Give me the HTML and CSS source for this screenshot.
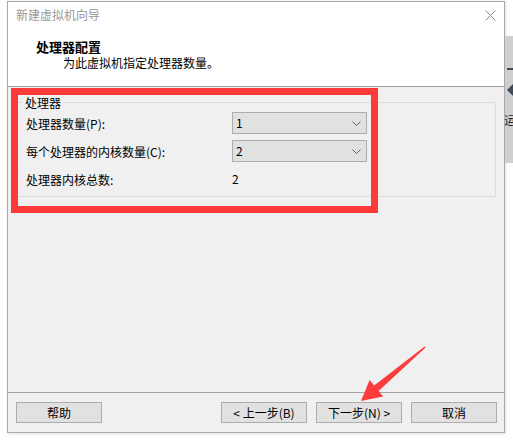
FILE: index.html
```html
<!DOCTYPE html>
<html lang="zh-CN">
<head>
<meta charset="utf-8">
<title>新建虚拟机向导</title>
<link rel="stylesheet" href="styles.css">
</head>
<body>
<div class="page">
  <div class="window">
    <div class="titlebar">
      <span class="title">新建虚拟机向导</span>
      <svg class="close" width="11" height="11" viewBox="0 0 11 11"><path d="M0.5 0.5 L10.5 10.5 M10.5 0.5 L0.5 10.5" stroke="#8a8a8a" stroke-width="1" fill="none"/></svg>
    </div>
    <div class="header">
      <div class="h-title">处理器配置</div>
      <div class="h-sub">为此虚拟机指定处理器数量。</div>
    </div>
    <div class="content">
      <div class="group">
        <div class="legend">处理器</div>
        <div class="rows">
          <div class="label">处理器数量(P):</div>
          <div class="select"><span>1</span><svg width="9" height="5" viewBox="0 0 9 5"><path d="M0.5 0.5 L4.5 4.5 L8.5 0.5" stroke="#606060" fill="none"/></svg></div>
          <div class="label">每个处理器的内核数量(C):</div>
          <div class="select"><span>2</span><svg width="9" height="5" viewBox="0 0 9 5"><path d="M0.5 0.5 L4.5 4.5 L8.5 0.5" stroke="#606060" fill="none"/></svg></div>
          <div class="label">处理器内核总数:</div>
          <div class="value">2</div>
        </div>
      </div>
    </div>
    <div class="footer">
      <div class="btn">帮助</div>
      <div class="spacer"></div>
      <div class="btn">&lt; 上一步(B)</div>
      <div class="btn">下一步(N) &gt;</div>
      <div class="btn">取消</div>
    </div>
  </div>
  <div class="strip">
    <div class="strip-band">
      <div class="dash"></div>
      <div class="tri"></div>
      <div class="glyph">运</div>
    </div>
  </div>
  <div class="mark"></div>
  <svg class="arrow" width="513" height="440" viewBox="0 0 513 440">
    <polygon points="425.6,347.6 378.6,390.9 383.2,396.4 361,401 369.6,380 374.2,385.5 424.6,346.4" fill="#fc3d3d"/>
  </svg>
</div>
</body>
</html>
```

FILE: styles.css
```css
html, body {
  margin: 0;
  padding: 0;
  background: #ffffff;
}

.page {
  position: relative;
  width: 513px;
  height: 440px;
  display: flex;
  align-items: flex-start;
  overflow: hidden;
  font-family: "Noto Sans CJK SC", "Noto Sans", sans-serif;
  font-size: 12px;
  color: #000;
}

.window {
  box-sizing: border-box;
  margin-left: 7px;
  margin-top: 1px;
  width: 498px;
  height: 432px;
  border: 1px solid #a9a9a9;
  background: #f0f0f0;
  display: flex;
  flex-direction: column;
  box-shadow: 1px 1px 3px rgba(0,0,0,0.12);
}

.titlebar {
  height: 26px;
  background: #fff;
  display: flex;
  align-items: center;
  justify-content: space-between;
  padding: 0 8px 0 8px;
}

.title {
  color: #999999;
  line-height: 16px;
}

.close {
  display: block;
  margin-top: 1px;
}

.header {
  background: #fff;
  border-bottom: 1px solid #a0a0a0;
  padding: 11px 0 15px 28px;
}

.h-title {
  font-weight: bold;
  font-size: 13px;
  line-height: 16px;
}

.h-sub {
  line-height: 16px;
  margin-left: 27px;
}

.content {
  flex: 1;
  padding: 15px 8px 0 9px;
}

.group {
  border: 1px solid #dcdcdc;
  padding: 0 8px 6px 8px;
}

.legend {
  width: fit-content;
  margin: -8px 0 0 -3px;
  padding: 0 2px;
  background: #f0f0f0;
  line-height: 16px;
}

.rows {
  margin-top: 1px;
  display: grid;
  grid-template-columns: 206px 135px;
  grid-auto-rows: 22px;
  row-gap: 6px;
  align-items: center;
}

.label {
  line-height: 16px;
  padding-top: 1px;
}

.select {
  box-sizing: border-box;
  height: 22px;
  border: 1px solid #adadad;
  background: #e1e1e1;
  display: flex;
  align-items: center;
  justify-content: space-between;
  padding: 0 5px 0 3px;
}

.select span {
  line-height: 16px;
}

.select svg {
  display: block;
}

.value {
  line-height: 16px;
}

.footer {
  border-top: 1px solid #a0a0a0;
  padding: 9px 7px 9px 8px;
  display: flex;
  gap: 9px;
}

.spacer {
  flex: 1;
}

.btn {
  box-sizing: border-box;
  width: 86px;
  height: 21px;
  border: 1px solid #adadad;
  background: #e1e1e1;
  display: flex;
  align-items: center;
  justify-content: center;
  line-height: 16px;
}

.strip {
  width: 8px;
  height: 440px;
  overflow: hidden;
}

.strip-band {
  margin-top: 36px;
  height: 127px;
  background: #cfcfcf;
  display: flow-root;
}

.dash {
  margin-top: 32px;
  margin-left: 2px;
  width: 6px;
  height: 2px;
  background: #3c4a5a;
}

.tri {
  margin-top: 14px;
  margin-left: 2px;
  width: 0;
  height: 0;
  border-top: 6px solid transparent;
  border-bottom: 6px solid transparent;
  border-right: 6px solid #3c4a5a;
}

.glyph {
  margin-top: 17px;
  margin-left: -1px;
  line-height: 14px;
  font-size: 12px;
  color: #222;
  white-space: nowrap;
}

.mark {
  position: absolute;
  left: 11px;
  top: 88px;
  width: 367px;
  height: 125px;
  box-sizing: border-box;
  border: 7px solid #fc3a3a;
}

.arrow {
  position: absolute;
  left: 0;
  top: 0;
  pointer-events: none;
}
```
